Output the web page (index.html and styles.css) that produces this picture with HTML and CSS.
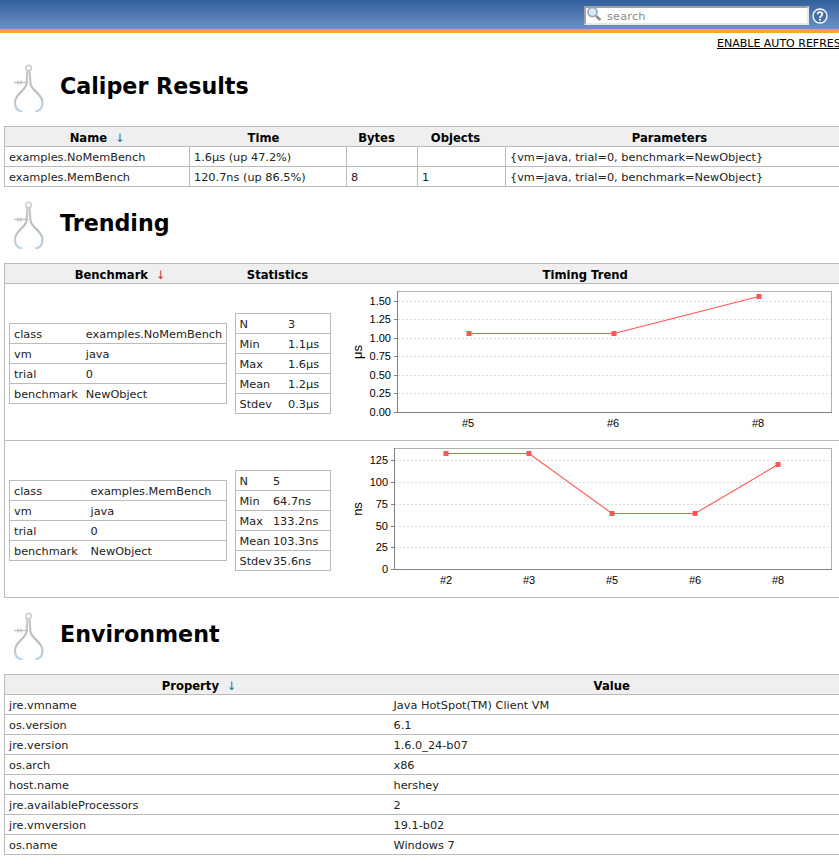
FILE: index.html
```html
<!DOCTYPE html>
<html lang="en">
  <head>
    <meta charset="UTF-8" />
    <title>Caliper Results</title>
    <link rel="stylesheet" href="styles.css">
  </head>
  <body>
    <svg width="0" height="0" class="defs">
      <defs>
        <linearGradient id="steel" x1="0" y1="0" x2="0" y2="1">
          <stop offset="0" stop-color="#c8cbce" />
          <stop offset="0.5" stop-color="#b8bcbe" />
          <stop offset="1" stop-color="#bcd6e6" />
        </linearGradient>
        <symbol id="caliper" viewBox="0 0 30 48">
          <circle cx="14.500" cy="4" r="2.800" fill="none" stroke="#c6cace" stroke-width="1.400" />
          <path d="M0 18.500 H14" stroke="#c0c4c8" stroke-width="1.400" />
          <path d="M4 16.500 V20.500 M7 16.500 V20.500" stroke="#b4babe" stroke-width="1.200" />
          <path d="M13.500 6.500 L12.500 20 C11 27 1 30 1 38.500 C1 44 4 47 8.500 47.500" fill="none" stroke="url(#steel)" stroke-width="2.200" />
          <path d="M15.500 6.500 L16.500 20 C18 27 28.500 30 28.500 38.500 C28.500 44 25.500 47 21 47.500" fill="none" stroke="url(#steel)" stroke-width="2.200" />
        </symbol>
      </defs>
    </svg>

    <div id="header">
      <div id="search-box">
        <svg class="search-icon" width="16" height="16" viewBox="0 0 16 16">
          <circle cx="6.500" cy="6" r="4.500" fill="#dce8f4" stroke="#8ea4bc" stroke-width="1.600" />
          <path d="M10 10 L14.500 14" stroke="#8a8a8a" stroke-width="2.400" />
        </svg>
        <span class="search-text">search</span>
      </div>
      <svg class="help-icon" width="16" height="16" viewBox="0 0 16 16">
        <circle cx="8" cy="8" r="7" fill="#4a6ea6" stroke="#fff" stroke-width="1.300" />
        <path d="M5.700 6.200 C5.700 3.400 10.400 3.400 10.400 6.100 C10.400 7.900 8 7.900 8 9.900" fill="none" stroke="#fff" stroke-width="1.700" />
        <rect x="7.100" y="10.900" width="1.800" height="1.800" fill="#fff" />
      </svg>
    </div>

    <div id="page">
      <div class="refresh-row"><a href="#">Enable auto refresh</a></div>

      <div class="section-head">
        <svg class="caliper" width="30" height="48"><use href="#caliper" /></svg>
        <h1>Caliper Results</h1>
      </div>
      <table class="data results">
        <tr>
          <th class="col-name">Name <span class="sort blue">↓</span></th>
          <th class="col-time">Time</th>
          <th class="col-bytes">Bytes</th>
          <th class="col-objects">Objects</th>
          <th class="last">Parameters</th>
        </tr>
        <tr>
          <td>examples.NoMemBench</td>
          <td>1.6μs (up 47.2%)</td>
          <td></td>
          <td></td>
          <td>{vm=java, trial=0, benchmark=NewObject}</td>
        </tr>
        <tr>
          <td>examples.MemBench</td>
          <td>120.7ns (up 86.5%)</td>
          <td>8</td>
          <td>1</td>
          <td>{vm=java, trial=0, benchmark=NewObject}</td>
        </tr>
      </table>

      <div class="section-head">
        <svg class="caliper" width="30" height="48"><use href="#caliper" /></svg>
        <h1>Trending</h1>
      </div>
      <table class="data trending open">
        <tr>
          <th class="col-benchmark">Benchmark <span class="sort red">↓</span></th>
          <th class="col-stats">Statistics</th>
          <th class="last">Timing Trend</th>
        </tr>
        <tr class="trend-row">
          <td>
            <table class="inner info">
              <tr><td class="key-a">class</td><td>examples.NoMemBench</td></tr>
              <tr><td>vm</td><td>java</td></tr>
              <tr><td>trial</td><td>0</td></tr>
              <tr><td>benchmark</td><td>NewObject</td></tr>
            </table>
          </td>
          <td>
            <table class="inner stats">
              <tr><td class="key-c">N</td><td>3</td></tr>
              <tr><td>Min</td><td>1.1μs</td></tr>
              <tr><td>Max</td><td>1.6μs</td></tr>
              <tr><td>Mean</td><td>1.2μs</td></tr>
              <tr><td>Stdev</td><td>0.3μs</td></tr>
            </table>
          </td>
          <td class="chart-cell">
            <svg class="chart" width="500" height="156" viewBox="340 284 500 156">
              <rect x="397.500" y="291.500" width="434" height="121" fill="#fff" stroke="#b0b0b0" />
              <g class="grid">
                <path d="M398 301.500H831M398 319.500H831M398 338.500H831M398 356.500H831M398 375.500H831M398 393.500H831" />
              </g>
              <path d="M397.500 291V412.500H832" class="axis" />
              <path d="M394 301.500H397M394 319.500H397M394 338.500H397M394 356.500H397M394 375.500H397M394 393.500H397M394 412.500H397" class="axis" />
              <g class="ticks" text-anchor="end">
                <text x="391" y="305">1.50</text>
                <text x="391" y="323">1.25</text>
                <text x="391" y="342">1.00</text>
                <text x="391" y="360">0.75</text>
                <text x="391" y="379">0.50</text>
                <text x="391" y="397">0.25</text>
                <text x="391" y="416">0.00</text>
              </g>
              <text class="unit" transform="translate(362 352) rotate(-90)" text-anchor="middle">μs</text>
              <polyline class="line" points="469,333.500 614,333.500 759,296.500" />
              <g class="dots">
                <rect x="466.500" y="331" width="5" height="5" />
                <rect x="611.500" y="331" width="5" height="5" />
                <rect x="756.500" y="294" width="5" height="5" />
              </g>
              <g class="ticks" text-anchor="middle">
                <text x="468" y="427">#5</text>
                <text x="613" y="427">#6</text>
                <text x="758" y="427">#8</text>
              </g>
            </svg>
          </td>
        </tr>
        <tr class="trend-row">
          <td>
            <table class="inner info">
              <tr><td class="key-b">class</td><td>examples.MemBench</td></tr>
              <tr><td>vm</td><td>java</td></tr>
              <tr><td>trial</td><td>0</td></tr>
              <tr><td>benchmark</td><td>NewObject</td></tr>
            </table>
          </td>
          <td>
            <table class="inner stats compact">
              <tr><td class="key-d">N</td><td>5</td></tr>
              <tr><td>Min</td><td>64.7ns</td></tr>
              <tr><td>Max</td><td>133.2ns</td></tr>
              <tr><td>Mean</td><td>103.3ns</td></tr>
              <tr><td>Stdev</td><td>35.6ns</td></tr>
            </table>
          </td>
          <td class="chart-cell">
            <svg class="chart" width="500" height="156" viewBox="340 441 500 156">
              <rect x="394.500" y="448.500" width="437" height="121" fill="#fff" stroke="#b0b0b0" />
              <g class="grid">
                <path d="M395 460.500H831M395 482.500H831M395 504.500H831M395 526.500H831M395 547.500H831" />
              </g>
              <path d="M394.500 448V569.500H832" class="axis" />
              <path d="M391 460.500H394M391 482.500H394M391 504.500H394M391 526.500H394M391 547.500H394M391 569.500H394" class="axis" />
              <g class="ticks" text-anchor="end">
                <text x="388" y="464">125</text>
                <text x="388" y="486">100</text>
                <text x="388" y="508">75</text>
                <text x="388" y="530">50</text>
                <text x="388" y="551">25</text>
                <text x="388" y="573">0</text>
              </g>
              <text class="unit" transform="translate(362 509) rotate(-90)" text-anchor="middle">ns</text>
              <polyline class="line" points="446,453.500 529,453.500 612,513.500 695,513.500 778,464.500" />
              <g class="dots">
                <rect x="443.500" y="451" width="5" height="5" />
                <rect x="526.500" y="451" width="5" height="5" />
                <rect x="609.500" y="511" width="5" height="5" />
                <rect x="692.500" y="511" width="5" height="5" />
                <rect x="775.500" y="462" width="5" height="5" />
              </g>
              <g class="ticks" text-anchor="middle">
                <text x="446" y="584">#2</text>
                <text x="529" y="584">#3</text>
                <text x="612" y="584">#5</text>
                <text x="695" y="584">#6</text>
                <text x="778" y="584">#8</text>
              </g>
            </svg>
          </td>
        </tr>
      </table>

      <div class="section-head">
        <svg class="caliper" width="30" height="48"><use href="#caliper" /></svg>
        <h1>Environment</h1>
      </div>
      <table class="data env open">
        <tr>
          <th class="col-prop">Property <span class="sort blue">↓</span></th>
          <th class="last">Value</th>
        </tr>
        <tr><td>jre.vmname</td><td>Java HotSpot(TM) Client VM</td></tr>
        <tr><td>os.version</td><td>6.1</td></tr>
        <tr><td>jre.version</td><td>1.6.0_24-b07</td></tr>
        <tr><td>os.arch</td><td>x86</td></tr>
        <tr><td>host.name</td><td>hershey</td></tr>
        <tr><td>jre.availableProcessors</td><td>2</td></tr>
        <tr><td>jre.vmversion</td><td>19.1-b02</td></tr>
        <tr><td>os.name</td><td>Windows 7</td></tr>
      </table>
    </div>
  </body>
</html>
```

FILE: styles.css
```css
html,
body {
  margin: 0;
  height: 864px;
  overflow: hidden;
  background-color: #fff;
}

body {
  width: 839px;
  font-family: "DejaVu Sans", Verdana, sans-serif;
  font-size: 11.3px;
  color: #222;
}

.defs {
  display: block;
  height: 0;
}

#header {
  display: flex;
  align-items: center;
  justify-content: flex-end;
  gap: 3px;
  height: 29px;
  padding-right: 11px;
  border-bottom: 4px solid #f9a62c;
  background: linear-gradient(#33609e, #6c90c6);
}

#search-box {
  display: flex;
  align-items: center;
  gap: 5px;
  box-sizing: border-box;
  width: 225px;
  height: 19px;
  margin-top: 1px;
  border: 2px solid #a0a0a0;
  border-right-color: #e8e8e8;
  border-bottom-color: #e8e8e8;
  background-color: #fff;
  color: #8a8a8a;
  letter-spacing: 0.2px;
}

.search-text {
  padding-top: 2px;
}

.search-icon {
  flex: none;
  margin-top: -2px;
}

.help-icon {
  margin-top: 2px;
}

#page {
  width: 860px;
}

.refresh-row {
  display: flex;
  box-sizing: border-box;
  height: 17px;
  align-items: center;
  padding: 3px 0 0 717px;
  white-space: nowrap;
}

.refresh-row a {
  color: #000;
  font-size: 11px;
  text-transform: uppercase;
}

.section-head {
  display: flex;
  align-items: center;
  height: 76px;
  padding-left: 14px;
  box-sizing: border-box;
}

.caliper {
  flex: none;
  margin-right: 16px;
}

h1 {
  margin: 0 0 4px;
  font-size: 22.2px;
  line-height: 30px;
  color: #000;
}

table {
  border-collapse: collapse;
}

.data {
  width: 856px;
  margin-left: 4px;
  table-layout: fixed;
}

.data th,
.data td,
.inner td {
  box-sizing: border-box;
  height: 20px;
  padding: 2px 4px 0;
  border: 1px solid #bbb;
  white-space: nowrap;
}

.data th {
  border-left: 0;
  border-right: 0;
  background-color: #efefef;
  color: #000;
  font-size: 11.6px;
  text-align: center;
}

.data th:first-child {
  border-left: 1px solid #bbb;
}

.data th.last {
  padding-right: 30px;
}

.data th.col-stats {
  padding-right: 18px;
}

.data th.col-time {
  padding-right: 13px;
}

.data th.col-bytes {
  padding-right: 15px;
}

.data th.col-objects {
  padding-right: 16px;
}

.data th.col-benchmark {
  padding-left: 7px;
}

.data th.col-prop {
  padding-left: 8px;
}

.open > tbody > tr > td {
  border-left: 0;
  border-right: 0;
}

.open > tbody > tr > td:first-child {
  border-left: 1px solid #bbb;
}

.sort {
  margin-left: 4px;
  font-weight: normal;
}

.blue {
  color: #2a6f8e;
}

.red {
  color: #c0392b;
}

.col-name { width: 185px; }
.col-time { width: 157px; }
.col-bytes { width: 71px; }
.col-objects { width: 88px; }
.col-benchmark { width: 228px; }
.col-stats { width: 104px; }
.col-prop { width: 385px; }

.data .trend-row > td {
  height: 157px;
  padding: 2px 4px 0;
}

.data .trend-row > td.chart-cell {
  padding: 0;
}

.inner {
  background-color: #fff;
}

.inner td {
  border-left: 0;
  border-right: 0;
}

.inner td:first-child {
  border-left: 1px solid #bbb;
}

.inner td:last-child {
  border-right: 1px solid #bbb;
}

.info {
  width: 218px;
}

.stats {
  width: 96px;
  margin-left: -2px;
}

.compact td:first-child {
  padding-right: 0;
}

.compact td:last-child {
  padding-left: 1px;
}

.key-a { width: 72px; }
.key-b { width: 77px; }
.key-c { width: 49px; }
.key-d { width: 35px; }

.chart {
  display: block;
  margin-left: 3px;
}

.grid path {
  fill: none;
  stroke: #ddd;
  stroke-dasharray: 2 2;
}

.axis {
  fill: none;
  stroke: #808080;
}

.ticks text {
  font-family: "Liberation Sans", Arial, sans-serif;
  font-size: 11px;
  fill: #000;
}

.unit {
  font-family: "Liberation Sans", Arial, sans-serif;
  font-size: 13px;
  fill: #000;
}

.line {
  fill: none;
  stroke: #ff5555;
  stroke-width: 1.1;
}

.dots rect {
  fill: #ff5555;
}
```
